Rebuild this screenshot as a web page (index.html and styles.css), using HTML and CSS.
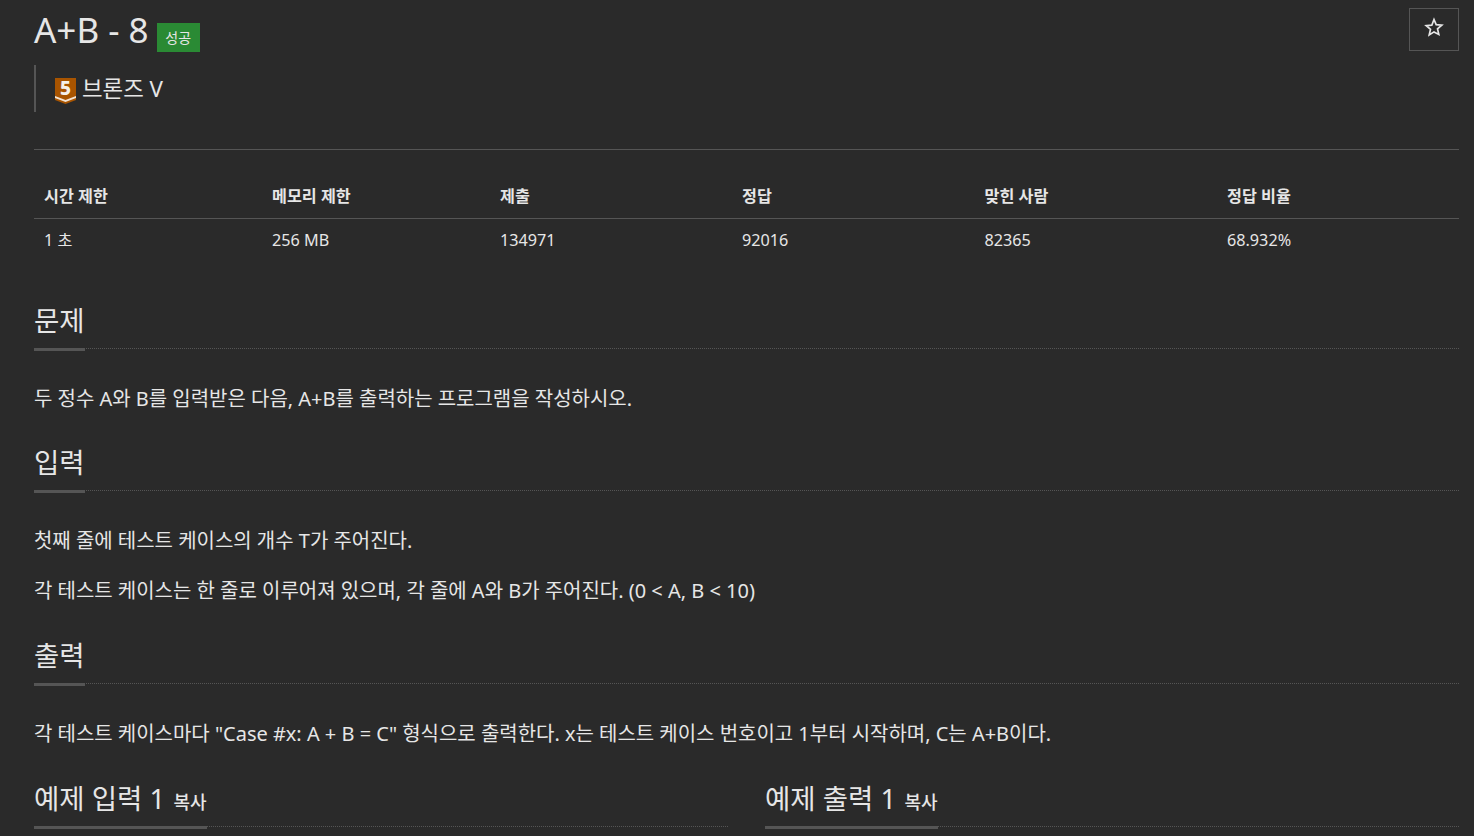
FILE: index.html
```html
<!DOCTYPE html>
<html lang="ko">
<head>
<meta charset="utf-8">
<title>A+B - 8</title>
<link rel="stylesheet" href="styles.css">
</head>
<body>
<main class="page">
  <header class="title-row">
    <div class="title-main">
      <h1 class="title">A+B - 8</h1>
      <span class="badge">성공</span>
    </div>
    <button class="star-btn" aria-label="즐겨찾기">
      <svg class="star-icon" width="20" height="20" viewBox="0 0 20 20"><path d="M10 2.500l2.200 5.200 5.600.5-4.300 3.700 1.300 5.500L10 14.900l-4.800 3 1.300-5.500-4.300-3.700 5.600-.5z" fill="none" stroke="#e6e6e6" stroke-width="1.700" stroke-linejoin="miter"/></svg>
    </button>
  </header>
  <div class="tier">
    <svg class="tier-icon" width="21" height="26" viewBox="0 0 21 26"><path d="M0 0h21v22l-10.500 4L0 22z" fill="#a85400"/><path d="M0 18l10.500 4 10.500-4v2l-10.500 4-10.500-4z" fill="#f3e3d2"/><text x="10.500" y="16.500" text-anchor="middle" class="tier-num">5</text></svg>
    <span class="tier-name">브론즈 V</span>
  </div>
  <hr class="rule">
  <div class="stats">
    <div class="stat-head">시간 제한</div><div class="stat-head">메모리 제한</div><div class="stat-head">제출</div><div class="stat-head">정답</div><div class="stat-head">맞힌 사람</div><div class="stat-head">정답 비율</div>
    <div class="stat-cell">1 초</div><div class="stat-cell">256 MB</div><div class="stat-cell">134971</div><div class="stat-cell">92016</div><div class="stat-cell">82365</div><div class="stat-cell">68.932%</div>
  </div>
  <section class="section">
    <div class="headline"><h2>문제</h2></div>
    <p>두 정수 A와 B를 입력받은 다음, A+B를 출력하는 프로그램을 작성하시오.</p>
  </section>
  <section class="section">
    <div class="headline"><h2>입력</h2></div>
    <p>첫째 줄에 테스트 케이스의 개수 T가 주어진다.</p>
    <p>각 테스트 케이스는 한 줄로 이루어져 있으며, 각 줄에 A와 B가 주어진다. (0 &lt; A, B &lt; 10)</p>
  </section>
  <section class="section">
    <div class="headline"><h2>출력</h2></div>
    <p>각 테스트 케이스마다 "Case #x: A + B = C" 형식으로 출력한다. x는 테스트 케이스 번호이고 1부터 시작하며, C는 A+B이다.</p>
  </section>
  <div class="samples">
    <div class="headline"><h2>예제 입력 1 <button class="copy">복사</button></h2></div>
    <div class="headline"><h2>예제 출력 1 <button class="copy">복사</button></h2></div>
  </div>
</main>
</body>
</html>
```
FILE: styles.css
```css
* { box-sizing: border-box; }
html, body { margin: 0; height: 836px; overflow: hidden; background: #2a2a2a; }
body { color: #e6e6e6; font-family: "Noto Sans", "Noto Sans CJK KR", sans-serif; font-size: 20px; }
.page { padding: 0 15px 0 34px; }
.title-row { display: flex; justify-content: space-between; align-items: flex-start; padding-top: 8px; }
.title-main { display: flex; align-items: flex-start; gap: 8px; }
.title { margin: 0; font-size: 35px; line-height: 44px; font-weight: 400; color: #e6e6e6; }
.badge { margin-top: 15px; width: 43px; height: 29px; background: #2a8a34; color: #e6e6e6; font-size: 14px; line-height: 29px; text-align: center; }
.star-btn { width: 50px; height: 43px; padding: 0 0 6px; background: transparent; border: 1px solid #555; display: flex; align-items: center; justify-content: center; }
.tier { margin-top: 13px; height: 47px; border-left: 2px solid #555; padding-left: 19px; display: flex; align-items: center; gap: 6px; }
.tier-icon { flex: none; margin-top: 5px; overflow: visible; }
.tier-num { font-family: "Noto Sans", sans-serif; font-size: 19px; font-weight: 800; fill: #f5f0ea; }
.tier-name { font-size: 22.4px; line-height: 28px; margin-top: 1px; }
.rule { margin: 37px 0 0; border: 0; border-top: 1px solid #555; }
.stats { display: grid; grid-template-columns: 228px 228px 242px 242.5px 242.5px 1fr; margin-top: 24px; }
.stat-head { padding: 0 10px; height: 45px; line-height: 44px; font-size: 16.2px; font-weight: 700; border-bottom: 1px solid #555; }
.stat-cell { padding: 0 10px; height: 44px; line-height: 43px; font-size: 16.2px; }
.headline { border-bottom: 1px dotted #555; height: 48px; }
.headline h2 { display: inline-block; margin: 0; height: 50px; font-size: 27.5px; line-height: 40px; font-weight: 400; border-bottom: 3px solid #555; }
.stats + .section { margin-top: 38px; }
.section p { margin: 0; font-size: 19.98px; line-height: 30px; }
.section p + p { margin-top: 20px; }
.section .headline { margin-bottom: 35px; }
.section + .section { margin-top: 29.4px; }
.samples { display: grid; grid-template-columns: 1fr 1fr; column-gap: 37px; margin-top: 30px; }
.copy { padding: 0; margin-left: 1px; border: 0; background: transparent; color: #e6e6e6; font: 500 18px "Noto Sans", "Noto Sans CJK KR", sans-serif; }
```
